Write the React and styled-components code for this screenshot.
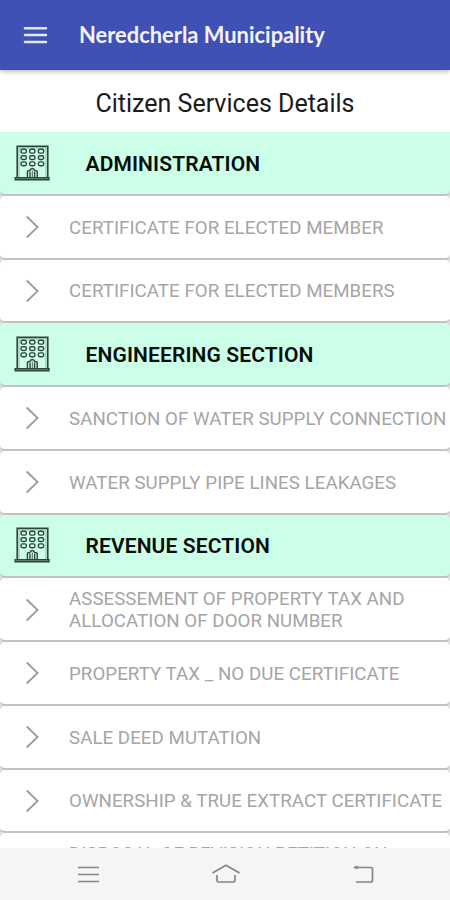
import React from 'react';
import styled, { createGlobalStyle } from 'styled-components';

const GlobalStyle = createGlobalStyle`
	* {
		box-sizing: border-box;
	}

	body {
		margin: 0;
		background-color: #ffffff;
		font-family: Roboto, sans-serif;
	}
`

const Screen = styled.div`
	width: 100%;
	height: 900px;
	display: flex;
	flex-direction: column;
	overflow: hidden;
`

const AppBar = styled.header`
	flex: 0 0 70px;
	display: flex;
	align-items: center;
	padding-left: 23px;
	background-color: #3f51b5;
	box-shadow: 0 1px 5px rgba(0, 0, 0, 0.35);
	z-index: 1;
`

const MenuIcon = styled.svg`
	width: 25px;
	height: 20px;
	stroke: #e6e8f8;
	stroke-width: 2.6;
	stroke-linecap: round;
`

const AppTitle = styled.h1`
	margin: 0 0 2px 31px;
	font-family: Lato, sans-serif;
	font-size: 21.9px;
	font-weight: 700;
	color: #f3f4ff;
`

const PageTitle = styled.h2`
	flex: 0 0 61.4px;
	margin: 0;
	padding-top: 5px;
	line-height: 57px;
	text-align: center;
	font-size: 25px;
	font-weight: 400;
	color: #1b1b1b;
`

const List = styled.main`
	flex: 1;
	min-height: 0;
	overflow: hidden;
	background-color: #dedede;
`

const Row = styled.div`
	height: 63.75px;
	display: flex;
	align-items: center;
	border-bottom: 2px solid #c2c2c2;
	border-radius: 5px;
	background-color: #ffffff;
`

const SectionRow = styled(Row)`
	padding-left: 14px;
	background-color: #ccffe8;

	&:first-child {
		border-top-left-radius: 0;
		border-top-right-radius: 0;
	}
`

const SectionName = styled.h3`
	margin: 2px 0 0 35.5px;
	font-size: 21px;
	font-weight: 600;
	letter-spacing: 0.12px;
	color: #080c0a;
`

const ServiceRow = styled(Row)`
	padding-left: 25px;
`

const ServiceName = styled.p`
	margin: 2px 0 0 30px;
	font-size: 18.7px;
	line-height: 22px;
	white-space: pre-line;
	letter-spacing: 0.05px;
	color: #a5a5a5;
`

const Chevron = styled.svg`
	width: 14px;
	height: 24px;
	margin-top: 1px;
	fill: none;
	stroke: #9b9b9b;
	stroke-width: 1.8;
`

const Building = styled.svg`
	width: 36px;
	height: 36px;
	fill: none;
	stroke: #2f453a;
	stroke-width: 1.4;
`

const NavBar = styled.nav`
	flex: 0 0 52px;
	display: flex;
	align-items: center;
	justify-content: space-between;
	padding: 0 76px 0 77px;
	background-color: #f5f5f5;
`

const NavIcon = styled.svg`
	height: 22px;
	fill: none;
	stroke: #858585;
	stroke-width: 1.7;
`

const sections = [
	{
		name: 'ADMINISTRATION',
		services: [
			'CERTIFICATE FOR ELECTED MEMBER',
			'CERTIFICATE FOR ELECTED MEMBERS'
		]
	},
	{
		name: 'ENGINEERING SECTION',
		services: [
			'SANCTION OF WATER SUPPLY CONNECTION',
			'WATER SUPPLY PIPE LINES LEAKAGES'
		]
	},
	{
		name: 'REVENUE SECTION',
		services: [
			'ASSESSEMENT OF PROPERTY TAX AND\nALLOCATION OF DOOR NUMBER',
			'PROPERTY TAX _ NO DUE CERTIFICATE',
			'SALE DEED MUTATION',
			'OWNERSHIP & TRUE EXTRACT CERTIFICATE',
			'DISPOSAL OF REVISION PETITION ON\n\u00a0'
		]
	}
];

const windowRows = [6.2, 12.6, 18.8];
const windowCols = [9.7, 18.3, 27];

const BuildingIcon = () => (
	<Building viewBox="0 0 36 36">
		<path d="M3.2 33V1.4h30.6V33" strokeWidth="1.6" />
		<path d="M5 33V3h27V33" stroke="#8fb5a4" strokeWidth="1" />
		<path d="M1.2 32.6h33.8v2.2H1.2z" fill="#6c8f7f" />
		{windowRows.map(y => windowCols.map(x => (
			<rect key={`${x}-${y}`} x={x - 2.7} y={y - 1.9} width="5.4" height="3.8" rx="1.7" />
		)))}
		<path d="M13.4 33v-6.5q0-.8.8-.8h1.6c.8-2.9 4.2-2.9 5 0h1.6q.8 0 .8.8V33M16 33v-6M20.6 33v-6" />
		<path d="M18.3 33v-7.5" strokeWidth="0.8" />
	</Building>
)

const App = () => (
	<>
		<GlobalStyle />
		<Screen>
			<AppBar>
				<MenuIcon viewBox="0 0 25 20">
					<path d="M2 3.2h21M2 10h21M2 17h21" />
				</MenuIcon>
				<AppTitle>Neredcherla Municipality</AppTitle>
			</AppBar>
			<PageTitle>Citizen Services Details</PageTitle>
			<List>
				{sections.map(section => (
					<React.Fragment key={section.name}>
						<SectionRow>
							<BuildingIcon />
							<SectionName>{section.name}</SectionName>
						</SectionRow>
						{section.services.map(service => (
							<ServiceRow key={service}>
								<Chevron viewBox="0 0 14 24">
									<path d="M1.7 1.5L12.6 12L1.7 22.5" />
								</Chevron>
								<ServiceName>{service}</ServiceName>
							</ServiceRow>
						))}
					</React.Fragment>
				))}
			</List>
			<NavBar>
				<NavIcon width="23" viewBox="0 0 23 22">
					<path d="M1 4.5h21M1 11.5h21M1 18.5h21" />
				</NavIcon>
				<NavIcon width="30" viewBox="0 0 30 22">
					<path d="M1.5 10L15 2.2L28.5 10M6 12v5.5q0 1.5 1.5 1.5h15q1.5 0 1.5-1.5V12" />
				</NavIcon>
				<NavIcon width="22" viewBox="0 0 22 22">
					<path d="M2 4.5h16.5q2 0 2 2v10.5q0 2-2 2H4" />
					<path d="M5.5 2.2v4L1.2 4.6z" fill="#858585" stroke="none" />
				</NavIcon>
			</NavBar>
		</Screen>
	</>
)

export default App;
